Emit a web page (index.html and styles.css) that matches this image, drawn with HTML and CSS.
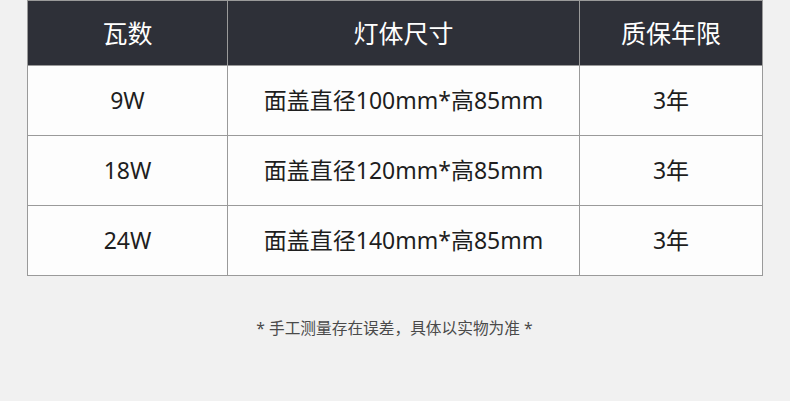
FILE: index.html
```html
<!DOCTYPE html>
<html lang="zh">
<head>
<meta charset="utf-8">
<link rel="stylesheet" href="styles.css">
</head>
<body>
<div class="page">
  <table class="spec">
    <colgroup>
      <col class="c1"><col class="c2"><col class="c3">
    </colgroup>
    <thead>
      <tr><th>瓦数</th><th>灯体尺寸</th><th>质保年限</th></tr>
    </thead>
    <tbody>
      <tr><td>9W</td><td>面盖直径100mm*高85mm</td><td>3年</td></tr>
      <tr><td>18W</td><td>面盖直径120mm*高85mm</td><td>3年</td></tr>
      <tr><td>24W</td><td>面盖直径140mm*高85mm</td><td>3年</td></tr>
    </tbody>
  </table>
  <p class="note">* 手工测量存在误差，具体以实物为准 *</p>
</div>
</body>
</html>
```
FILE: styles.css
```css
html, body {
  margin: 0;
  padding: 0;
  background: #f1f1f1;
}
body {
  font-family: "Noto Sans", "Noto Sans CJK SC", sans-serif;
  width: 790px;
  height: 401px;
  overflow: hidden;
}
.page {
  padding: 0 28px 0 27px;
}
.spec {
  width: 735px;
  border-collapse: collapse;
  table-layout: fixed;
}
.c1 { width: 200px; }
.c2 { width: 352px; }
.c3 { width: 183px; }
.spec th, .spec td {
  border: 1px solid #9a9a9a;
  text-align: center;
  padding: 0;
  line-height: 1;
}
.spec th {
  background: #2e3038;
  color: #ffffff;
  font-weight: 400;
  font-size: 25px;
  height: 64px;
}
.spec td {
  background: #fdfdfd;
  color: #1e1e1e;
  font-size: 23px;
  height: 69px;
}
.note {
  margin: 42px 0 0;
  text-align: center;
  font-size: 15.7px;
  line-height: 20px;
  color: #4a4a4a;
}
```
